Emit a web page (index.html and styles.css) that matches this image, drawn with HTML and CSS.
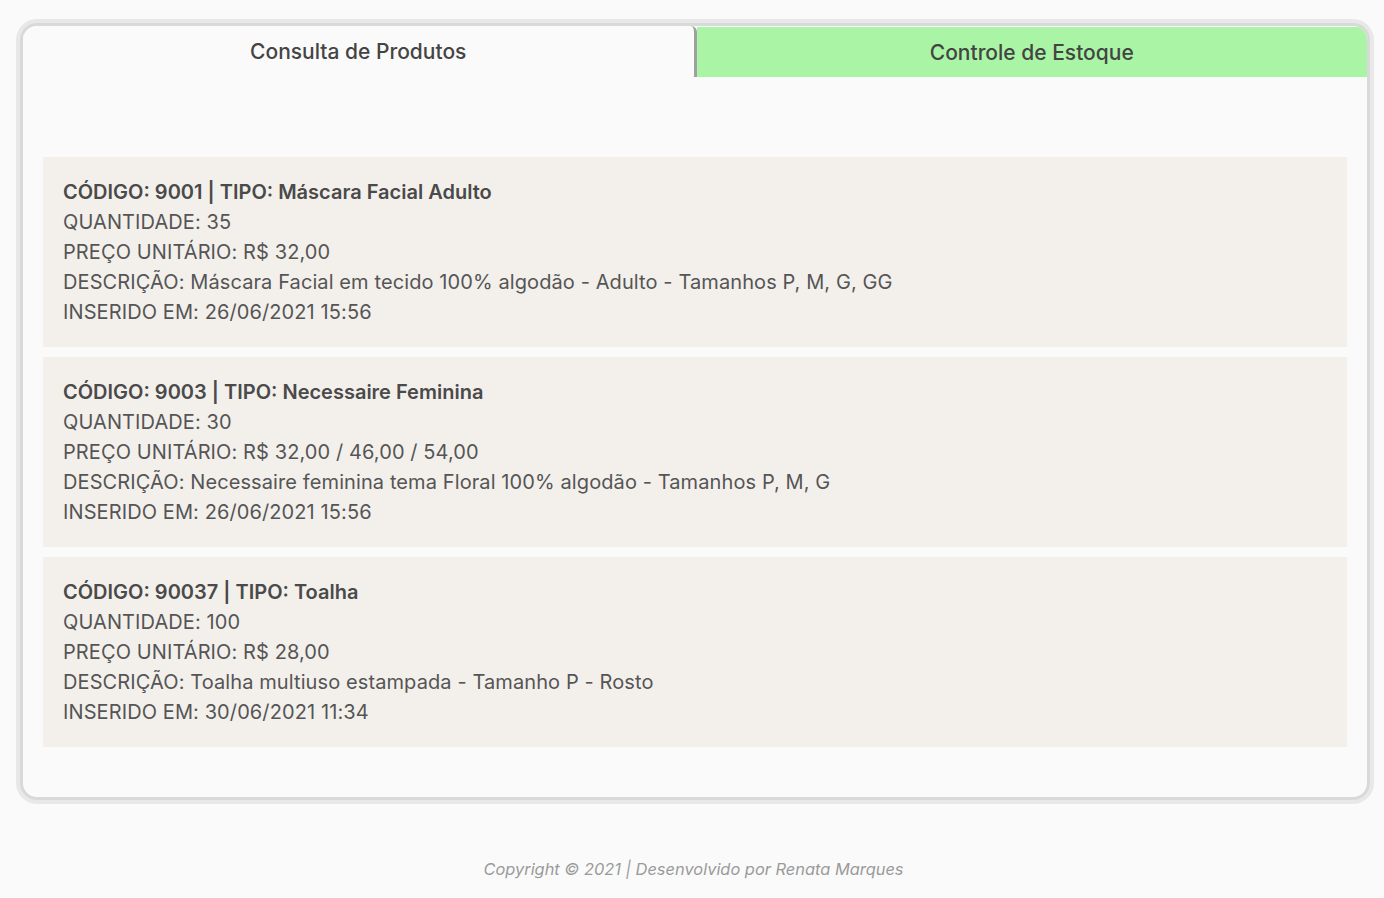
FILE: index.html
```html
<!DOCTYPE html>
<html lang="pt-BR">
<head>
<meta charset="utf-8">
<title>Produtos</title>
<link rel="stylesheet" href="styles.css">
</head>
<body>
<main class="panel">
  <nav class="tabs">
    <div class="tab tab-active">Consulta de Produtos</div>
    <div class="tab tab-other">Controle de Estoque</div>
  </nav>
  <section class="list">
    <article class="item">
      <p class="title">CÓDIGO: 9001 | TIPO: Máscara Facial Adulto</p>
      <p>QUANTIDADE: 35</p>
      <p>PREÇO UNITÁRIO: R$ 32,00</p>
      <p>DESCRIÇÃO: Máscara Facial em tecido 100% algodão - Adulto - Tamanhos P, M, G, GG</p>
      <p>INSERIDO EM: 26/06/2021 15:56</p>
    </article>
    <article class="item">
      <p class="title">CÓDIGO: 9003 | TIPO: Necessaire Feminina</p>
      <p>QUANTIDADE: 30</p>
      <p>PREÇO UNITÁRIO: R$ 32,00 / 46,00 / 54,00</p>
      <p>DESCRIÇÃO: Necessaire feminina tema Floral 100% algodão - Tamanhos P, M, G</p>
      <p>INSERIDO EM: 26/06/2021 15:56</p>
    </article>
    <article class="item">
      <p class="title">CÓDIGO: 90037 | TIPO: Toalha</p>
      <p>QUANTIDADE: 100</p>
      <p>PREÇO UNITÁRIO: R$ 28,00</p>
      <p>DESCRIÇÃO: Toalha multiuso estampada - Tamanho P - Rosto</p>
      <p>INSERIDO EM: 30/06/2021 11:34</p>
    </article>
  </section>
</main>
<footer class="footer">Copyright © 2021 | Desenvolvido por Renata Marques</footer>
</body>
</html>
```
FILE: styles.css
```css
* { box-sizing: border-box; }
html, body { margin: 0; padding: 0; }
body {
  background: #fafafa;
  font-family: Inter, "DejaVu Sans", sans-serif;
  color: #555;
  padding: 26px 20px 0 23px;
}
.panel {
  width: 1344px;
  height: 771px;
  background: #fafafa;
  border-radius: 14px;
  box-shadow: 0 0 0 3px #d9d9d9, 0 0 0 7px #e8e8e8;
  overflow: hidden;
}
.tabs {
  display: flex;
  height: 51px;
}
.tab {
  flex: 1;
  display: flex;
  align-items: center;
  justify-content: center;
  font-size: 21px;
  font-weight: 500;
  color: #444;
}
.tab-active {
  background: #fafafa;
  border-right: 3px solid #a0a0a0;
  border-top-right-radius: 6px;
}
.tab-other {
  background: #aaf5a5;
  margin-top: 1px;
}
.list {
  display: flex;
  flex-direction: column;
  gap: 10px;
  padding: 80px 20px 0 20px;
}
.item {
  background: #f3f0ec;
  padding: 20px 20px;
}
.item p {
  margin: 0;
  font-size: 20px;
  line-height: 30px;
  letter-spacing: 0.1px;
  color: #555;
}
.item p.title {
  font-weight: 600;
  letter-spacing: 0;
  color: #4a4a4a;
}
.footer {
  text-align: center;
  font-style: italic;
  font-size: 16.4px;
  color: #9a9a9a;
  margin-top: 62px;
}
```
